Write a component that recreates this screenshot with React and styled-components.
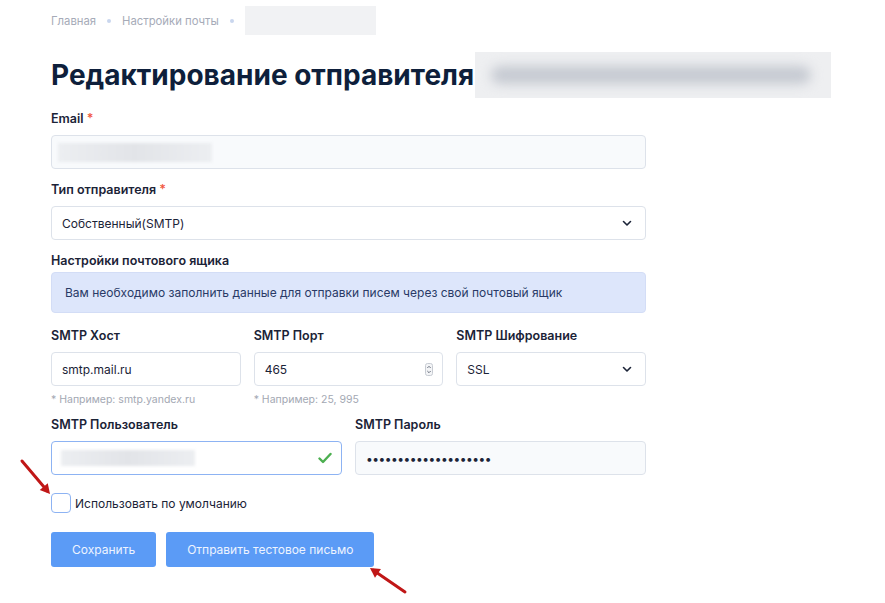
import React from 'react';
import styled, { createGlobalStyle } from 'styled-components';

const GlobalStyle = createGlobalStyle`
  body {
    margin: 0;
    background: #ffffff;
    font-family: Inter, "Noto Sans", sans-serif;
    color: #1b2337;
  }
`;

const Page = styled.div`
  position: relative;
  width: 885px;
  height: 603px;
  overflow: hidden;
  padding: 6px 0 0 51px;
  box-sizing: border-box;
`;

const Crumbs = styled.nav`
  display: flex;
  align-items: center;
  gap: 11px;
  height: 29px;
  font-size: 11.3px;
  color: #a6abb8;
`;

const Dot = styled.span`
  width: 4px;
  height: 4px;
  border-radius: 50%;
  background: #c9d6ee;
`;

const Blur = styled.span`
  display: block;
  width: ${(p) => p.w}px;
  height: ${(p) => p.h}px;
  background: ${(p) => p.bg || 'linear-gradient(90deg, #eceef1, #e2e4e8 50%, #eceef1)'};
  filter: ${(p) => (p.soft ? 'blur(1.5px)' : 'none')};
`;

const TitleRow = styled.div`
  display: flex;
  align-items: center;
  margin-top: 17px;
  height: 46px;
`;

const Title = styled.h1`
  margin: 0;
  font-size: 28px;
  font-weight: 700;
  color: #0e1f3b;
  white-space: nowrap;
`;

const TitleBlur = styled.span`
  display: block;
  width: 356px;
  height: 46px;
  margin-left: -9px;
  background: #eeeff1;
  position: relative;
  &::after {
    content: '';
    position: absolute;
    left: 16px;
    right: 20px;
    top: 14px;
    height: 18px;
    border-radius: 9px;
    background: #c5c9d1;
    filter: blur(6px);
  }
`;

const Form = styled.div`
  width: 595px;
  margin-top: 13px;
  display: flex;
  flex-direction: column;
`;

const Label = styled.div`
  font-size: 12.5px;
  font-weight: 600;
  color: #1b2337;
  height: 16px;
  line-height: 16px;
  margin-bottom: ${(p) => p.mb ?? 8}px;
  span {
    color: #f1583f;
  }
`;

const Field = styled.div`
  height: 34px;
  box-sizing: border-box;
  border: ${(p) => (p.active ? '1.5px solid #8db3f3' : '1px solid #dde2ea')};
  background: ${(p) => (p.white ? '#ffffff' : '#f8fafc')};
  border-radius: 4px;
  display: flex;
  align-items: center;
  justify-content: space-between;
  padding: 0 ${(p) => p.pr ?? 12}px 0 ${(p) => p.pl ?? 10}px;
  font-size: 12px;
  color: #1b2337;
`;

const Group = styled.div`
  margin-bottom: ${(p) => p.mb ?? 13}px;
`;

const Alert = styled.div`
  height: 41px;
  box-sizing: border-box;
  background: #dde6fb;
  border: 1px solid #d3ddf6;
  border-radius: 4px;
  display: flex;
  align-items: center;
  padding-left: 13px;
  font-size: 12px;
  color: #293a66;
  margin-bottom: 15px;
`;

const Row = styled.div`
  display: grid;
  grid-template-columns: ${(p) => p.cols};
  gap: 13px;
  margin-bottom: ${(p) => p.mb ?? 0}px;
`;

const Hint = styled.div`
  margin-top: 7px;
  font-size: 10.5px;
  color: #a3a8b3;
  height: 13px;
`;

const Dots = styled.span`
  font-size: 12px;
  letter-spacing: -0.5px;
  color: #1b2337;
`;

const Check = styled.label`
  display: flex;
  align-items: center;
  gap: 4px;
  margin-top: 18px;
  font-size: 12px;
  color: #1b2337;
`;

const Box = styled.span`
  width: 20px;
  height: 20px;
  box-sizing: border-box;
  border: 1.5px solid #8db3f3;
  border-radius: 4px;
  background: #fff;
`;

const Buttons = styled.div`
  display: flex;
  gap: 10px;
  margin-top: 19px;
`;

const Button = styled.button`
  height: 35px;
  padding: 0 ${(p) => p.px}px;
  border: none;
  border-radius: 3px;
  background: #5b9bf6;
  color: #eef4ff;
  font-family: inherit;
  font-size: 12px;
`;

const Arrow = styled.svg`
  position: absolute;
  left: ${(p) => p.x}px;
  top: ${(p) => p.y}px;
  pointer-events: none;
`;

const Chevron = () => (
  <svg width="12" height="12" viewBox="0 0 12 12">
    <path d="M2.5 4.5 L6 8 L9.5 4.5" fill="none" stroke="#1b2337" strokeWidth="1.6" strokeLinecap="round" strokeLinejoin="round" />
  </svg>
);

const Spinner = () => (
  <svg width="8" height="13" viewBox="0 0 8 13">
    <rect x="0.5" y="0.5" width="7" height="12" rx="2" fill="#f3f4f6" stroke="#c7cbd2" />
    <path d="M2.3 5 L4 3.3 L5.7 5" fill="none" stroke="#6b7280" strokeWidth="1" />
    <path d="M2.3 8 L4 9.7 L5.7 8" fill="none" stroke="#6b7280" strokeWidth="1" />
  </svg>
);

const Tick = () => (
  <svg width="14" height="12" viewBox="0 0 14 12">
    <path d="M1.5 6.5 L5 10 L12.5 2" fill="none" stroke="#4caf50" strokeWidth="2.4" strokeLinecap="round" strokeLinejoin="round" />
  </svg>
);

const RedArrow = ({ x, y, w, h, from, to }) => {
  const [x1, y1] = from;
  const [x2, y2] = to;
  const ang = Math.atan2(y2 - y1, x2 - x1);
  const len = 11;
  const spread = 0.5;
  const a1 = [x2 - len * Math.cos(ang - spread), y2 - len * Math.sin(ang - spread)];
  const a2 = [x2 - len * Math.cos(ang + spread), y2 - len * Math.sin(ang + spread)];
  return (
    <Arrow x={x} y={y} width={w} height={h} viewBox={`0 0 ${w} ${h}`}>
      <line x1={x1} y1={y1} x2={x2 - 4 * Math.cos(ang)} y2={y2 - 4 * Math.sin(ang)} stroke="#c01717" strokeWidth="3" strokeLinecap="round" />
      <polygon points={`${x2},${y2} ${a1[0]},${a1[1]} ${a2[0]},${a2[1]}`} fill="#c01717" />
    </Arrow>
  );
};

export default function App() {
  return (
    <>
      <GlobalStyle />
      <Page>
        <Crumbs>
          <span>Главная</span>
          <Dot />
          <span>Настройки почты</span>
          <Dot />
          <Blur w={131} h={29} bg="#f1f2f4" />
        </Crumbs>

        <TitleRow>
          <Title>Редактирование отправителя:</Title>
          <TitleBlur />
        </TitleRow>

        <Form>
          <Group>
            <Label>
              Email <span>*</span>
            </Label>
            <Field pl={6}>
              <Blur w={154} h={19} soft />
            </Field>
          </Group>

          <Group>
            <Label>
              Тип отправителя <span>*</span>
            </Label>
            <Field white>
              <span>Собственный(SMTP)</span>
              <Chevron />
            </Field>
          </Group>

          <Label mb={3}>Настройки почтового ящика</Label>
          <Alert>Вам необходимо заполнить данные для отправки писем через свой почтовый ящик</Alert>

          <Row cols="1fr 1fr 1fr" mb={11}>
            <div>
              <Label>SMTP Хост</Label>
              <Field white>smtp.mail.ru</Field>
              <Hint>* Например: smtp.yandex.ru</Hint>
            </div>
            <div>
              <Label>SMTP Порт</Label>
              <Field white pr={9}>
                <span>465</span>
                <Spinner />
              </Field>
              <Hint>* Например: 25, 995</Hint>
            </div>
            <div>
              <Label>SMTP Шифрование</Label>
              <Field white>
                <span>SSL</span>
                <Chevron />
              </Field>
            </div>
          </Row>

          <Row cols="1fr 1fr">
            <div>
              <Label>SMTP Пользователь</Label>
              <Field white active pl={9} pr={9}>
                <Blur w={134} h={16} soft />
                <Tick />
              </Field>
            </div>
            <div>
              <Label>SMTP Пароль</Label>
              <Field>
                <Dots>••••••••••••••••••••</Dots>
              </Field>
            </div>
          </Row>

          <Check>
            <Box />
            Использовать по умолчанию
          </Check>

          <Buttons>
            <Button px={21}>Сохранить</Button>
            <Button px={21}>Отправить тестовое письмо</Button>
          </Buttons>
        </Form>

        <RedArrow x={15} y={455} w={45} h={45} from={[7, 6]} to={[35, 39]} />
        <RedArrow x={360} y={560} w={50} h={40} from={[45, 32]} to={[10, 8]} />
      </Page>
    </>
  );
}
